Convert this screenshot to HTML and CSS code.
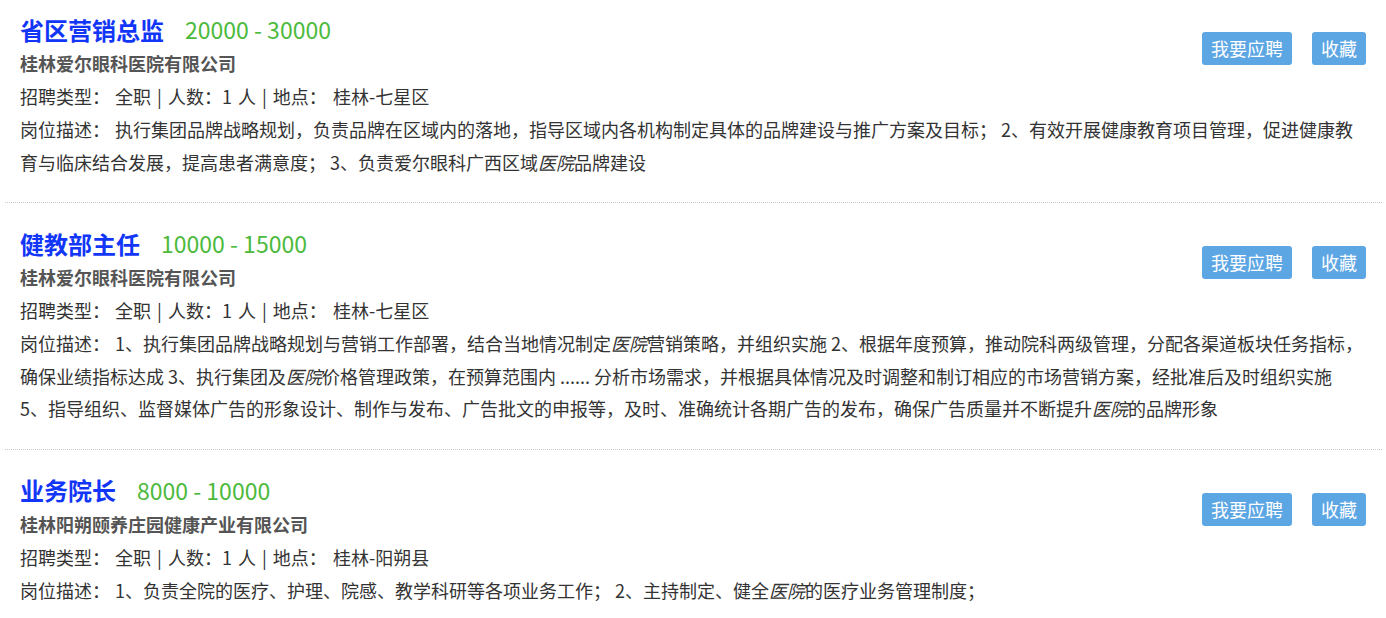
FILE: index.html
```
<!DOCTYPE html>
<html lang="zh-CN">
<head>
<meta charset="utf-8">
<title>职位列表</title>
<link rel="stylesheet" href="styles.css">
</head>
<body>
<div class="list">
  <div class="job">
    <div class="rating"><span>★★★★</span><span class="half">★</span></div>
    <div class="actions">
      <a class="btn">我要应聘</a>
      <a class="btn">收藏</a>
    </div>
    <div class="title-row">
      <a class="title">省区营销总监</a>
      <span class="salary">20000 - 30000</span>
    </div>
    <div class="company">桂林爱尔眼科医院有限公司</div>
    <div class="info"><span class="label">招聘类型：</span>全职 | 人数：1 人 | 地点： 桂林-七星区</div>
    <div class="desc"><span class="label">岗位描述：</span>执行集团品牌战略规划，负责品牌在区域内的落地，指导区域内各机构制定具体的品牌建设与推广方案及目标； 2、有效开展健康教育项目管理，促进健康教育与临床结合发展，提高患者满意度； 3、负责爱尔眼科广西区域<em>医院</em>品牌建设</div>
  </div>
  <div class="job">
    <div class="actions">
      <a class="btn">我要应聘</a>
      <a class="btn">收藏</a>
    </div>
    <div class="title-row">
      <a class="title">健教部主任</a>
      <span class="salary">10000 - 15000</span>
    </div>
    <div class="company">桂林爱尔眼科医院有限公司</div>
    <div class="info"><span class="label">招聘类型：</span>全职 | 人数：1 人 | 地点： 桂林-七星区</div>
    <div class="desc"><span class="label">岗位描述：</span>1、执行集团品牌战略规划与营销工作部署，结合当地情况制定<em>医院</em>营销策略，并组织实施 2、根据年度预算，推动院科两级管理，分配各渠道板块任务指标，确保业绩指标达成 3、执行集团及<em>医院</em>价格管理政策，在预算范围内 ...... 分析市场需求，并根据具体情况及时调整和制订相应的市场营销方案，经批准后及时组织实施<br>5、指导组织、监督媒体广告的形象设计、制作与发布、广告批文的申报等，及时、准确统计各期广告的发布，确保广告质量并不断提升<em>医院</em>的品牌形象</div>
  </div>
  <div class="job">
    <div class="actions">
      <a class="btn">我要应聘</a>
      <a class="btn">收藏</a>
    </div>
    <div class="title-row">
      <a class="title">业务院长</a>
      <span class="salary">8000 - 10000</span>
    </div>
    <div class="company">桂林阳朔颐养庄园健康产业有限公司</div>
    <div class="info"><span class="label">招聘类型：</span>全职 | 人数：1 人 | 地点： 桂林-阳朔县</div>
    <div class="desc"><span class="label">岗位描述：</span>1、负责全院的医疗、护理、院感、教学科研等各项业务工作； 2、主持制定、健全<em>医院</em>的医疗业务管理制度；</div>
  </div>
</div>
</body>
</html>
```
FILE: styles.css
```
html, body {
  margin: 0;
  padding: 0;
  background: #fff;
}
body {
  font-family: "Noto Sans CJK SC", "Noto Sans", sans-serif;
  color: #333;
  font-size: 18px;
  overflow: hidden;
}
.list {
  margin: -11px 4px 0 5px;
}
.job {
  position: relative;
  padding: 22px 16px 24px 15px;
  border-bottom: 1px dotted #c8c8c8;
}
.rating {
  position: absolute;
  top: -10px;
  right: 20px;
  font-size: 13px;
  line-height: 13px;
  color: #f08a00;
  letter-spacing: -1px;
}
.rating .half {
  margin-left: 42px;
  color: #f0a040;
}
.actions {
  float: right;
  display: flex;
  gap: 20px;
  margin-top: 21px;
}
.btn {
  display: block;
  background: #5da6e4;
  color: #fff;
  font-size: 18px;
  line-height: 33px;
  height: 33px;
  padding: 0 9px;
  border-radius: 3px;
  cursor: pointer;
}
.title-row {
  height: 36px;
  display: flex;
  align-items: center;
}
.title {
  font-size: 24px;
  font-weight: bold;
  color: #1236f8;
  margin-right: 21px;
}
.salary {
  font-size: 23px;
  color: #4cba3c;
}
.company {
  font-size: 18px;
  font-weight: bold;
  color: #555;
  line-height: 33px;
}
.info {
  line-height: 33px;
  word-spacing: 2px;
}
.desc {
  line-height: 32.5px;
}
.label {
  margin-right: 5px;
}
.desc em {
  font-style: italic;
}
```
